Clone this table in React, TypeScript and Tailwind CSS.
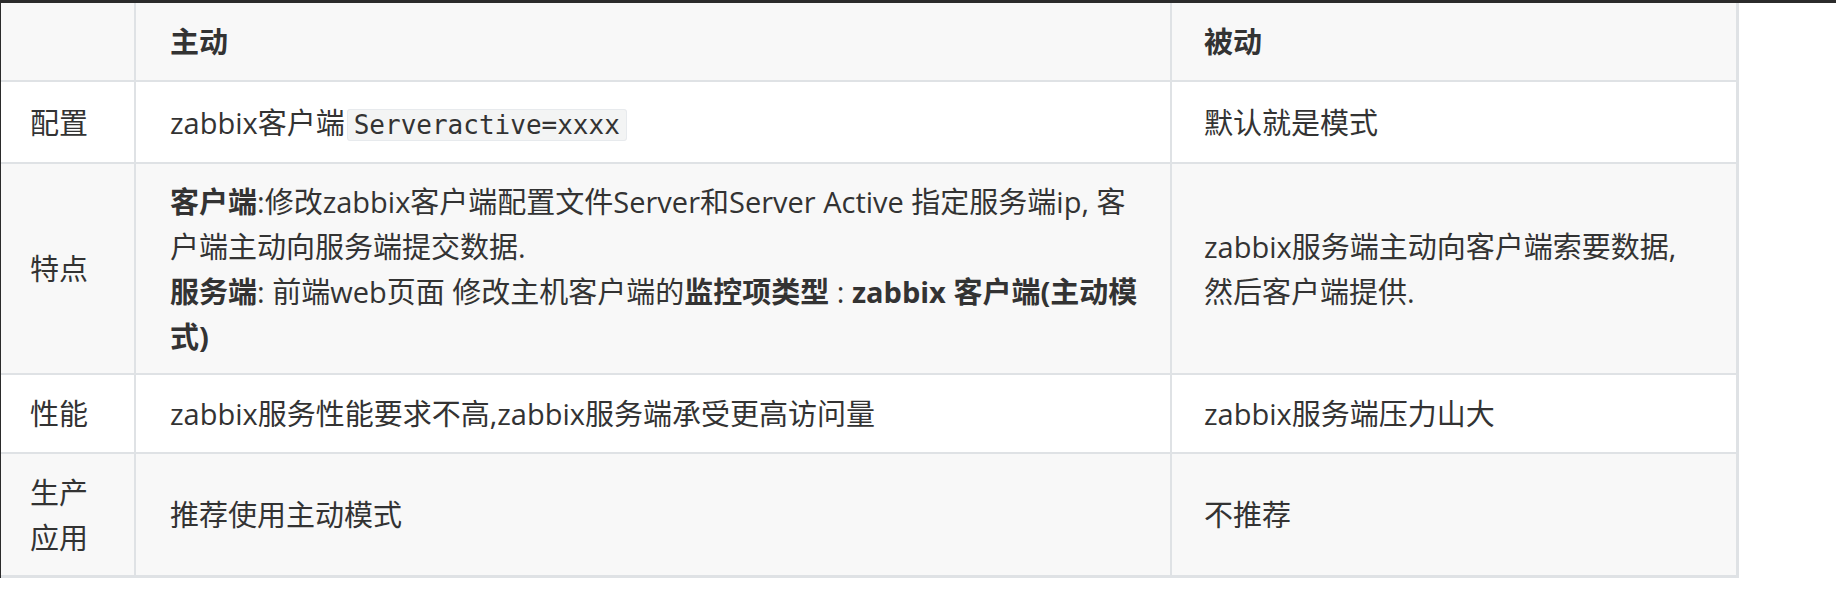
import React from "react";

const cellBase = "flex items-center border-r-2 border-[#dfe2e5]";

function Row({
  h,
  bg,
  c1,
  c2,
  c3,
  last,
}: {
  h: string;
  bg: string;
  c1?: React.ReactNode;
  c2?: React.ReactNode;
  c3?: React.ReactNode;
  last?: boolean;
}) {
  return (
    <div className={`flex ${h} ${bg} ${last ? "border-b-[3px]" : "border-b-2"} border-[#dfe2e5]`}>
      <div className={`${cellBase} w-[135px] shrink-0 pl-[29px] pr-[30px]`}>{c1}</div>
      <div className={`${cellBase} w-[1036px] shrink-0 pl-[34px] pr-[16px]`}>{c2}</div>
      <div className="flex items-center w-[567px] shrink-0 pl-[32px] pr-[10px] border-r-[3px] border-[#dfe2e5]">{c3}</div>
    </div>
  );
}

export default function App() {
  return (
    <div className="w-[1836px] h-[597px] bg-white overflow-hidden text-[#333] text-[29px] leading-[45px] font-['Open_Sans','Noto_Sans_CJK_SC',sans-serif]">
      <div className="h-[3px] bg-[#2b2b2b]" />
      <div className="flex">
        <div className="w-px h-[575px] bg-[#2b2b2b] shrink-0" />
        <div className="flex flex-col w-[1738px]">
          <Row
            h="h-[79px]"
            bg="bg-[#f8f8f8]"
            c2={<span className="font-bold">主动</span>}
            c3={<span className="font-bold">被动</span>}
          />
          <Row
            h="h-[82px]"
            bg="bg-white"
            c1={<span>配置</span>}
            c2={
              <span>
                zabbix客户端
                <code className="mx-[2px] px-[6px] border border-[#e7eaed] bg-[#f3f4f4] rounded-[3px] text-[26px] leading-[28px] font-['DejaVu_Sans_Mono',monospace]">
                  Serveractive=xxxx
                </code>
              </span>
            }
            c3={<span>默认就是模式</span>}
          />
          <Row
            h="h-[211px]"
            bg="bg-[#f8f8f8]"
            c1={<span>特点</span>}
            c2={
              <div>
                <span className="font-bold">客户端</span>:修改zabbix客户端配置文件Server和Server Active 指定服务端ip, 客
                <br />
                户端主动向服务端提交数据.
                <br />
                <span className="font-bold">服务端</span>: 前端web页面 修改主机客户端的
                <span className="font-bold">监控项类型</span> : <span className="font-bold">zabbix 客户端(主动模</span>
                <br />
                <span className="font-bold">式)</span>
              </div>
            }
            c3={
              <div>
                zabbix服务端主动向客户端索要数据,
                <br />
                然后客户端提供.
              </div>
            }
          />
          <Row
            h="h-[79px]"
            bg="bg-white"
            c1={<span>性能</span>}
            c2={<span>zabbix服务性能要求不高,zabbix服务端承受更高访问量</span>}
            c3={<span>zabbix服务端压力山大</span>}
          />
          <Row
            h="h-[124px]"
            bg="bg-[#f8f8f8]"
            last
            c1={<span>生产应用</span>}
            c2={<span>推荐使用主动模式</span>}
            c3={<span>不推荐</span>}
          />
        </div>
      </div>
    </div>
  );
}
